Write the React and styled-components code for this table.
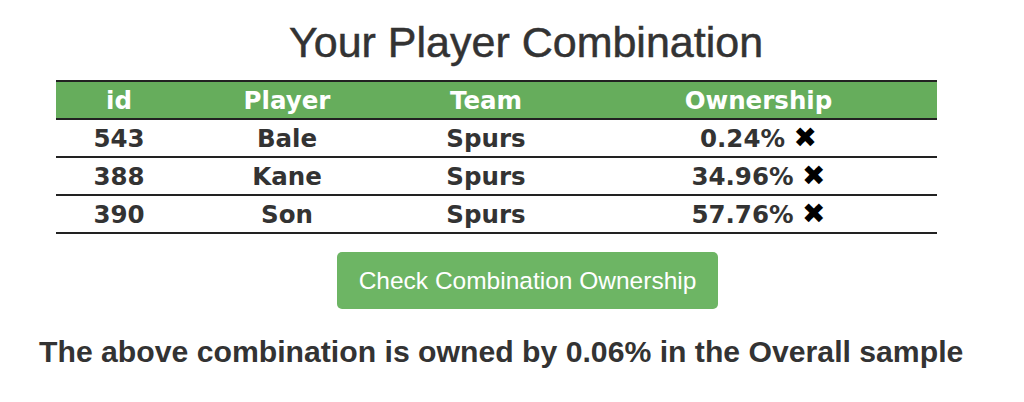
import styled, { createGlobalStyle } from "styled-components";

const GlobalStyle = createGlobalStyle`
  body {
    margin: 0;
    background: #ffffff;
    font-family: "Liberation Sans", Arial, sans-serif;
  }
`;

const Page = styled.div`
  width: 1024px;
  display: flex;
  flex-direction: column;
  align-items: flex-start;
  padding-top: 21px;
`;

const Title = styled.h2`
  margin: 0 0 0 289px;
  font-size: 43px;
  font-weight: 400;
  color: #333333;
  line-height: 42px;
  -webkit-text-stroke: 0.5px #333333;
`;

const Table = styled.table`
  margin: 17px 0 0 56px;
  width: 881px;
  border-collapse: collapse;
  font-family: "DejaVu Sans", Verdana, sans-serif;
  font-weight: bold;
  font-size: 24.5px;
  color: #333333;
`;

const HeadRow = styled.tr`
  background: #66ad5c;
  color: #ffffff;
  border-top: 2px solid #222222;
  border-bottom: 2px solid #222222;
`;

const Row = styled.tr`
  border-bottom: 2px solid #222222;
`;

const Cell = styled.td`
  text-align: center;
  height: 34px;
  padding: 2px 0 0;
  line-height: 34px;
  width: ${(p) => p.$w}px;
`;

const Cross = styled.span`
  color: #000000;
  font-size: 28px;
  line-height: 1;
`;

const Button = styled.button`
  margin: 18px 0 0 337px;
  width: 381px;
  height: 57px;
  background: #6db564;
  border: none;
  border-radius: 5px;
  color: #ffffff;
  font-family: "Liberation Sans", Arial, sans-serif;
  font-size: 24.5px;
`;

const Summary = styled.p`
  margin: 26px 0 0 39px;
  font-size: 30.2px;
  font-weight: bold;
  color: #333333;
`;

const players = [
  { id: 543, name: "Bale", team: "Spurs", own: "0.24%" },
  { id: 388, name: "Kane", team: "Spurs", own: "34.96%" },
  { id: 390, name: "Son", team: "Spurs", own: "57.76%" },
];

const widths = [126, 210, 188, 357];

export default function App() {
  return (
    <>
      <GlobalStyle />
      <Page>
        <Title>Your Player Combination</Title>
        <Table>
          <thead>
            <HeadRow>
              <Cell as="th" $w={widths[0]}>id</Cell>
              <Cell as="th" $w={widths[1]}>Player</Cell>
              <Cell as="th" $w={widths[2]}>Team</Cell>
              <Cell as="th" $w={widths[3]}>Ownership</Cell>
            </HeadRow>
          </thead>
          <tbody>
            {players.map((p) => (
              <Row key={p.id}>
                <Cell $w={widths[0]}>{p.id}</Cell>
                <Cell $w={widths[1]}>{p.name}</Cell>
                <Cell $w={widths[2]}>{p.team}</Cell>
                <Cell $w={widths[3]}>
                  {p.own} <Cross>✖</Cross>
                </Cell>
              </Row>
            ))}
          </tbody>
        </Table>
        <Button>Check Combination Ownership</Button>
        <Summary>The above combination is owned by 0.06% in the Overall sample</Summary>
      </Page>
    </>
  );
}
